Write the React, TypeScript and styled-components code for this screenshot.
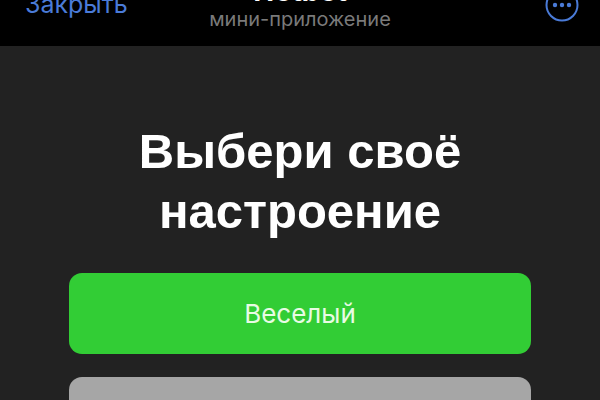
import styled, { createGlobalStyle } from "styled-components";

const GlobalStyle = createGlobalStyle`
html, body {
    margin: 0;
    padding: 0;
    background: #222222;
}
`;

const Screen = styled.div`
width: 600px;
height: 400px;
overflow: hidden;
display: flex;
flex-direction: column;
background: #222222;
font-family: "Liberation Sans", Arial, sans-serif;
`;

const Header = styled.header`
flex: 0 0 46px;
height: 46px;
background: #000000;
display: grid;
grid-template-columns: 1fr auto 1fr;
padding: 0 21px;
overflow: hidden;
`;

const CloseLink = styled.a`
color: #4a7bd8;
font-family: Inter, "Liberation Sans", sans-serif;
font-size: 25px;
line-height: 28px;
margin: -10px 0 0 4px;
`;

const TitleBlock = styled.div`
display: flex;
flex-direction: column;
align-items: center;
margin-top: -25px;
`;

const Title = styled.div`
color: #ffffff;
font-size: 29px;
font-weight: bold;
line-height: 32px;
`;

const Subtitle = styled.div`
color: #7a7a7a;
font-family: Inter, "Liberation Sans", sans-serif;
font-size: 20px;
line-height: 24px;
`;

const MenuButton = styled.div`
justify-self: end;
margin-top: -12px;
`;

const Content = styled.main`
flex: 1;
display: flex;
flex-direction: column;
align-items: center;
padding-top: 75px;
`;

const Heading = styled.h1`
margin: 0 0 32px;
color: #ffffff;
font-size: 49px;
line-height: 60px;
font-weight: bold;
text-align: center;
`;

const MoodList = styled.div`
width: 462px;
display: flex;
flex-direction: column;
gap: 23px;
`;

const MoodButton = styled.button<{ $color: string }>`
height: 81px;
flex: 0 0 81px;
border: 0;
border-radius: 13px;
background: ${(props) => props.$color};
color: #e8fbe4;
font-family: Inter, "Liberation Sans", sans-serif;
font-size: 26px;
`;

export default function App() {
    return (
        <Screen>
            <GlobalStyle />
            <Header>
                <CloseLink>Закрыть</CloseLink>
                <TitleBlock>
                    <Title>Hotbot</Title>
                    <Subtitle>мини-приложение</Subtitle>
                </TitleBlock>
                <MenuButton>
                    <svg width="34" height="34" viewBox="0 0 34 34">
                        <circle cx="17" cy="17" r="15.5" fill="none" stroke="#4a7bd8" strokeWidth="2" />
                        <circle cx="10" cy="17" r="2.2" fill="#4a7bd8" />
                        <circle cx="17" cy="17" r="2.2" fill="#4a7bd8" />
                        <circle cx="24" cy="17" r="2.2" fill="#4a7bd8" />
                    </svg>
                </MenuButton>
            </Header>
            <Content>
                <Heading>
                    Выбери своё
                    <br />
                    настроение
                </Heading>
                <MoodList>
                    <MoodButton $color="#32cd35">Веселый</MoodButton>
                    <MoodButton $color="#a6a6a6" />
                </MoodList>
            </Content>
        </Screen>
    );
}
